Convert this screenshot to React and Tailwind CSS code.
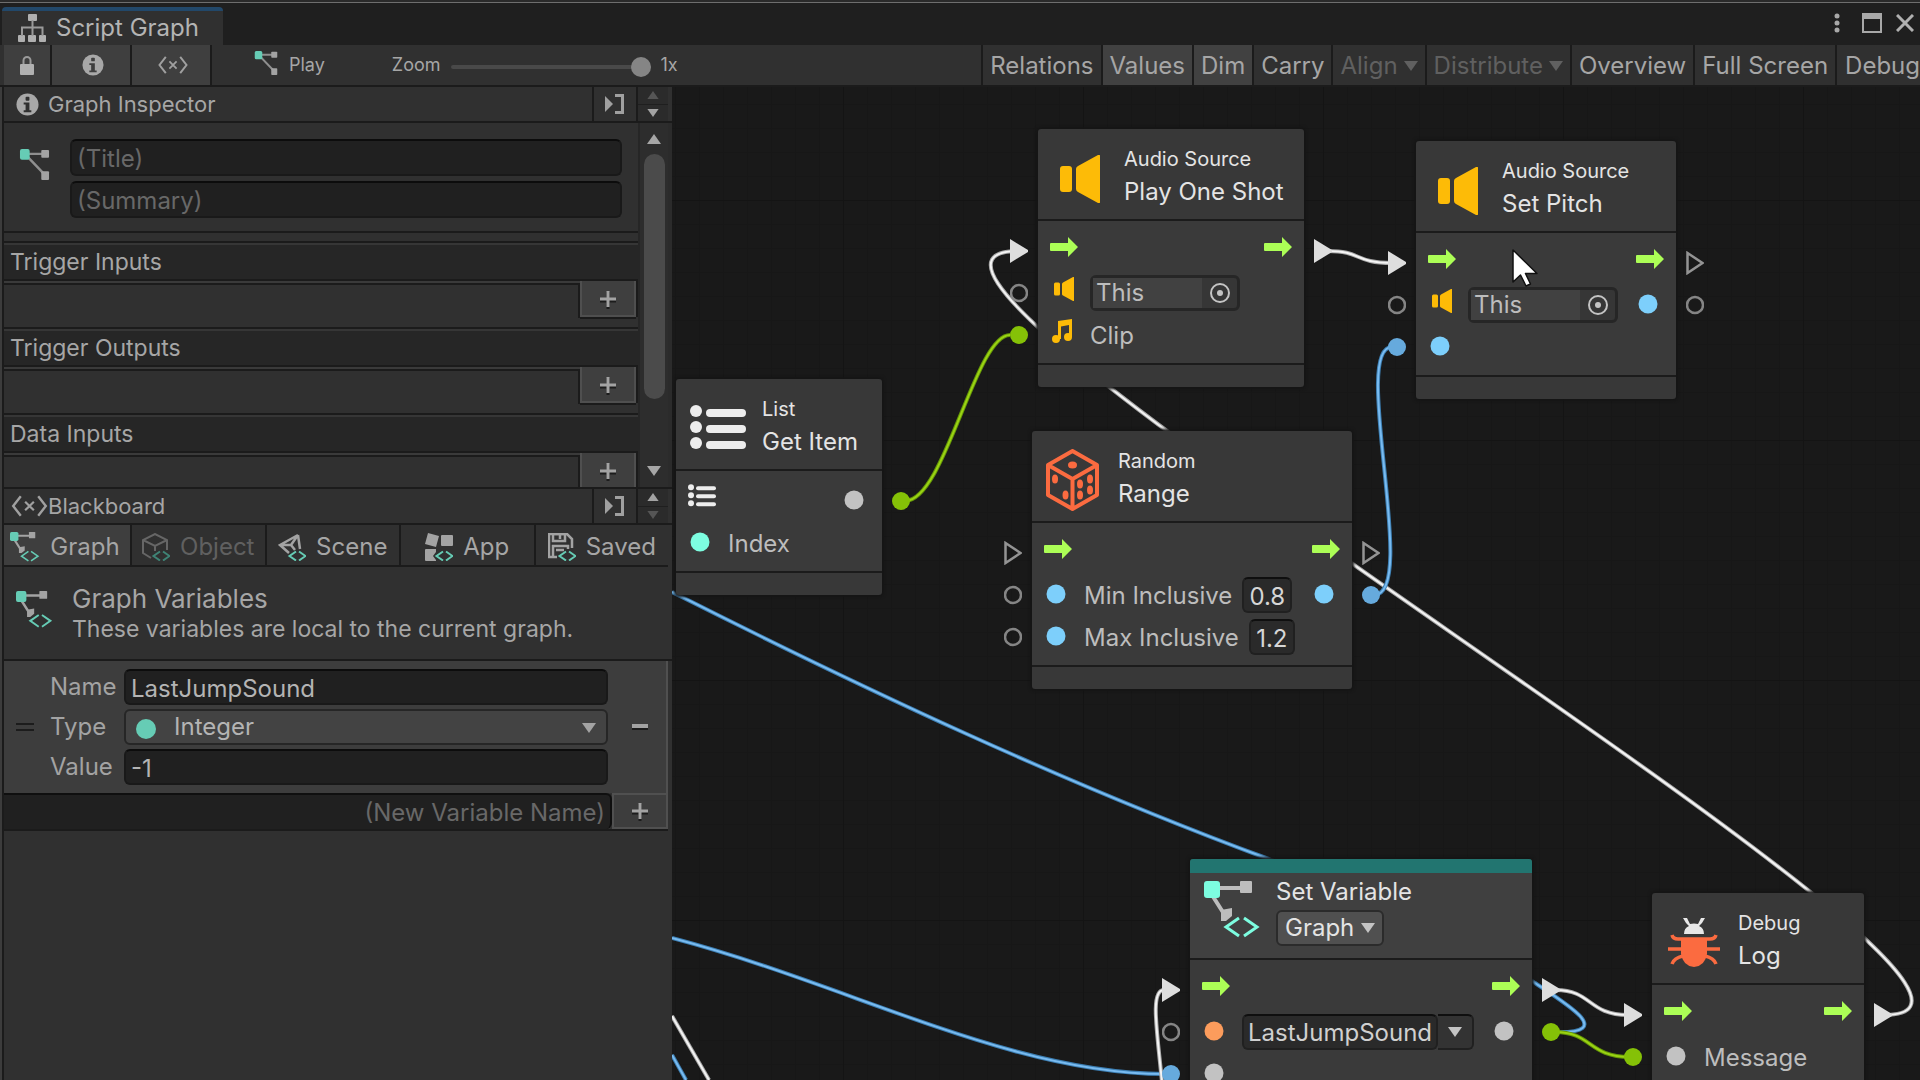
import React from "react";

const TEAL = "#66ccb5";

/* ---------- icons ---------- */

function GraphIcon({ className }) {
  return (
    <svg className={className} viewBox="0 0 30 32" fill="none" aria-hidden="true">
      <path d="M8 5H24M5 5L26 27" stroke="#8f8f8f" strokeWidth="2.5" />
      <rect x="0" y="0" width="10" height="11" rx="2" fill={TEAL} />
      <rect x="22" y="1" width="8" height="8" rx="1" fill="#a3a3a3" />
      <rect x="22" y="23" width="8" height="9" rx="1" fill="#a3a3a3" />
    </svg>
  );
}

function Chevrons({ x, y, color }) {
  return (
    <g stroke={color} strokeWidth="3" fill="none" transform={`translate(${x} ${y})`}>
      <path d="M17 1L4 10L17 19" />
      <path d="M22 1L35 10L22 19" />
    </g>
  );
}

function GraphVariableIcon({ className, bright }) {
  const teal = bright ? "#7dfde0" : TEAL;
  const gray = bright ? "#bdbdbd" : "#a3a3a3";
  return (
    <svg className={className} viewBox="0 0 57 57" fill="none" aria-hidden="true">
      <path d="M14 7H38M8 14L22 36" stroke={gray} strokeWidth="4" />
      <rect x="0" y="0" width="16" height="17" rx="3" fill={teal} />
      <rect x="36" y="0" width="12" height="12" rx="1" fill={gray} />
      <path d="M17 29l11-2v8l-6 5h-5z" fill={gray} />
      <Chevrons x={18} y={36} color={teal} />
    </svg>
  );
}

function ScriptGraphIcon() {
  return (
    <svg className="h-7 w-7" viewBox="0 0 28 28" aria-hidden="true">
      <g fill="#b0b0b0">
        <rect x="10" y="0" width="9" height="7" rx="1" />
        <rect x="0" y="21" width="7" height="7" rx="1" />
        <rect x="10" y="21" width="8" height="7" rx="1" />
        <rect x="21" y="21" width="7" height="7" rx="1" />
      </g>
      <path d="M14.500 6V22M4 22V13.500H24.500V22" stroke="#9a9a9a" strokeWidth="2" fill="none" />
    </svg>
  );
}

function LockIcon() {
  return (
    <svg className="h-5 w-4" viewBox="0 0 16 20" aria-hidden="true">
      <rect x="1" y="8" width="14" height="11" rx="1" fill="#b0b0b0" />
      <path d="M4.500 8V4.500a3.500 3.500 0 0 1 7 0V8" stroke="#9a9a9a" strokeWidth="2" fill="none" />
    </svg>
  );
}

function InfoIcon({ className, hole }) {
  return (
    <svg className={className} viewBox="0 0 24 24" aria-hidden="true">
      <circle cx="12" cy="12" r="11.500" fill="#a8a8a8" />
      <g fill={hole}>
        <rect x="10" y="4" width="4" height="4" rx="1" />
        <path d="M8 10h6v8h2v2H8v-2h2v-6H8z" />
      </g>
    </svg>
  );
}

function BlackboardIcon({ className }) {
  return (
    <svg className={className} viewBox="0 0 34 20" fill="none" stroke="#a0a0a0" strokeWidth="2.200" aria-hidden="true">
      <path d="M9 1L2 10L9 19M25 1L32 10L25 19" />
      <path d="M13 6L21 14M21 6L13 14" strokeWidth="2" />
    </svg>
  );
}

function DockIcon() {
  return (
    <svg className="h-5 w-5" viewBox="0 0 20 20" aria-hidden="true">
      <path d="M0 2L8 10L0 18Z" fill="#a0a0a0" />
      <path d="M10 1.500H17.500V18.500H10" stroke="#a0a0a0" strokeWidth="3" fill="none" />
    </svg>
  );
}

function Triangle({ className, up }) {
  return (
    <svg className={className} viewBox="0 0 14 10" fill="currentColor" aria-hidden="true">
      <path d={up ? "M0 10L7 0L14 10Z" : "M0 0L7 10L14 0Z"} />
    </svg>
  );
}

function Plus() {
  return (
    <svg className="h-5 w-5" viewBox="0 0 20 20" aria-hidden="true">
      <path d="M2 12H18M10 3V20" stroke="#1c1c1c" strokeWidth="3" />
      <path d="M2 10H18M10 2V18" stroke="#a3a3a3" strokeWidth="3" />
    </svg>
  );
}

function TabChevrons({ color }) {
  return <path d="M18 18.500L11.500 23L18 27.500M21 18.500L27.500 23L21 27.500" stroke={color} strokeWidth="2" />;
}

function ObjectTabIcon() {
  return (
    <svg className="h-7 w-7" viewBox="0 0 28 28" fill="none" aria-hidden="true">
      <path d="M9 25L1 20V7L13 1L25 7V17M1 7L13 13L25 7M13 13V18" stroke="#666" strokeWidth="2" />
      <TabChevrons color="#3f8476" />
    </svg>
  );
}

function SceneTabIcon() {
  return (
    <svg className="h-7 w-7" viewBox="0 0 28 28" fill="none" aria-hidden="true">
      <path d="M20 2L2 12L11 20M20 2L22 16M20 2L13 12H2M13 12L17 17" stroke="#a3a3a3" strokeWidth="2.500" />
      <TabChevrons color={TEAL} />
    </svg>
  );
}

function AppTabIcon() {
  return (
    <svg className="h-7 w-7" viewBox="0 0 28 28" fill="none" aria-hidden="true">
      <g fill="#a3a3a3">
        <path d="M3 0L14 3L11 14L0 11Z" />
        <rect x="16" y="2" width="12" height="11" rx="1" />
        <path d="M0 17Q0 16 1 16H11V19L8 23L11 27V28H1Q0 28 0 27Z" />
      </g>
      <TabChevrons color={TEAL} />
    </svg>
  );
}

function SavedTabIcon() {
  return (
    <svg className="h-7 w-7" viewBox="0 0 28 28" fill="none" aria-hidden="true">
      <path d="M1 1H19L24 6V15M1 0V24H9" stroke="#a3a3a3" strokeWidth="2.500" />
      <path d="M5 1H17V8H5ZM12 2V6" stroke="#a3a3a3" strokeWidth="2.500" />
      <path d="M5 24V13H20V16M8 17H16" stroke="#a3a3a3" strokeWidth="2.500" />
      <TabChevrons color={TEAL} />
    </svg>
  );
}

function SpeakerIcon({ className }) {
  return (
    <svg className={className} viewBox="0 0 40 48" fill="#fdbb07" aria-hidden="true">
      <rect x="0" y="11" width="12" height="26" rx="3" />
      <path d="M16 14q0-2 2-3L38 0q2-1 2 1V47q0 2-2 1L18 37q-2-1-2-3Z" />
    </svg>
  );
}

function NoteIcon() {
  return (
    <svg className="-mt-2 mr-1 h-6 w-5" viewBox="0 0 20 24" fill="#fdbb07" aria-hidden="true">
      <path d="M6 2L20 0V18H17V6L9 7.500V20H6Z" />
      <circle cx="4" cy="20" r="4" />
      <circle cx="16" cy="18" r="4" />
    </svg>
  );
}

function ListIcon({ className }) {
  return (
    <svg className={className} viewBox="0 0 56 45" fill="#ededed" aria-hidden="true">
      {[6, 22, 38].map((y) => (
        <g key={y}>
          <circle cx="6" cy={y} r="6" />
          <rect x="16" y={y - 2} width="40" height="8" rx="4" />
        </g>
      ))}
    </svg>
  );
}

function DiceIcon() {
  return (
    <svg className="mr-1 h-[62px] w-[53px]" viewBox="0 0 53 62" fill="none" aria-hidden="true">
      <path
        d="M26.500 2L51 16V46L26.500 60L2 46V16ZM2 16L26.500 30L51 16M26.500 30V60"
        stroke="#fb6b40"
        strokeWidth="4"
        strokeLinejoin="round"
      />
      <g fill="#fb6b40">
        <ellipse cx="26.500" cy="16" rx="4.500" ry="3.500" />
        <ellipse cx="9" cy="30" rx="3" ry="4.500" />
        <ellipse cx="19.500" cy="46" rx="3" ry="4.500" />
        <ellipse cx="34" cy="35" rx="3" ry="4.500" />
        <ellipse cx="44" cy="30" rx="3" ry="4.500" />
        <ellipse cx="34" cy="46" rx="3" ry="4.500" />
        <ellipse cx="44" cy="41" rx="3" ry="4.500" />
      </g>
    </svg>
  );
}

function BugIcon() {
  return (
    <svg className="h-[49px] w-[52px]" viewBox="0 0 52 49" fill="none" aria-hidden="true">
      <path d="M16 16q0-6 5-8l-3-3-3-5h4l3 6q4-1 8 0l3-6h4l-3 5-3 3q5 2 5 8Z" fill="#e8e8e8" />
      <path
        d="M4 17q1 4 6 4H42q5 0 6-4M0 31H52M4 46q2-6 11-8M48 46q-2-6-11-8"
        stroke="#fb6b40"
        strokeWidth="3.500"
      />
      <path d="M13 20H39V36Q37 48 26 49Q15 48 13 36Z" fill="#fb6b40" />
    </svg>
  );
}

function FlowArrow() {
  return (
    <svg className="h-7 w-7 shrink-0" viewBox="0 0 28 28" fill="#acfe56" aria-hidden="true">
      <path d="M1 6H18V0L28 10L18 20V14H1Q0 14 0 13V7Q0 6 1 6Z" />
    </svg>
  );
}

function Dot({ color }) {
  return (
    <svg className="h-7 w-7 shrink-0" viewBox="0 0 28 28" aria-hidden="true">
      <circle cx="12" cy="13" r="9.500" fill={color} />
    </svg>
  );
}

function TargetIcon() {
  return (
    <svg className="h-5 w-5" viewBox="0 0 20 20" fill="none" aria-hidden="true">
      <circle cx="10" cy="10" r="9" stroke="#c4c4c4" strokeWidth="2" />
      <circle cx="10" cy="10" r="3" fill="#c4c4c4" />
    </svg>
  );
}

/* ---------- window bars ---------- */

function TitleBar() {
  return (
    <header className="flex h-[45px] shrink-0 items-end justify-between border-t-2 border-[#2a2a2a] bg-[#1f1f1f]">
      <div className="flex h-full w-full items-end justify-between border-t border-[#6e6e6e] pl-0.5">
        <div className="flex h-[38px] items-center gap-2.5 rounded-t border-t-4 border-[#22486a] bg-[#303030] pr-6 pl-4 text-2xl leading-8 text-[#b4b4b4]">
          <ScriptGraphIcon />
          Script Graph
        </div>
        <div className="flex h-[38px] items-center gap-[22px] pr-1.5 pb-1.5">
          <button aria-label="More" className="flex">
            <svg className="h-5 w-1.5" viewBox="0 0 6 20" fill="#a8a8a8">
              <circle cx="3" cy="3" r="2.500" />
              <circle cx="3" cy="10" r="2.500" />
              <circle cx="3" cy="17" r="2.500" />
            </svg>
          </button>
          <button aria-label="Maximize" className="flex">
            <svg className="h-5 w-5" viewBox="0 0 20 20" fill="none">
              <rect x="1" y="1" width="18" height="18" stroke="#a8a8a8" strokeWidth="2" />
              <path d="M0 3H20" stroke="#a8a8a8" strokeWidth="6" />
            </svg>
          </button>
          <button aria-label="Close" className="-ml-2 flex">
            <svg className="h-[18px] w-[18px]" viewBox="0 0 18 18" stroke="#b0b0b0" strokeWidth="3">
              <path d="M1 1L17 17M17 1L1 17" />
            </svg>
          </button>
        </div>
      </div>
    </header>
  );
}

const toolbarButtons = [
  { label: "Relations" },
  { label: "Values", active: true },
  { label: "Dim", active: true },
  { label: "Carry" },
  { label: "Align", disabled: true, menu: true },
  { label: "Distribute", disabled: true, menu: true },
  { label: "Overview" },
  { label: "Full Screen" },
];

function Toolbar() {
  return (
    <div className="flex h-[42px] shrink-0 overflow-hidden border-b-2 border-[#1b1b1b] bg-[#303030] pl-1">
      <button aria-label="Lock" className="flex w-12 items-center justify-center border-r-2 border-[#1b1b1b] bg-[#3f3f3f] pt-0.5">
        <LockIcon />
      </button>
      <button aria-label="Graph Inspector" className="flex w-20 items-center justify-center border-r-2 border-[#1b1b1b] bg-[#3f3f3f] pl-1">
        <InfoIcon className="h-[22px] w-[22px]" hole="#3f3f3f" />
      </button>
      <button aria-label="Blackboard" className="flex w-20 items-center justify-center border-r-2 border-[#1b1b1b] bg-[#3f3f3f] pl-1">
        <BlackboardIcon className="h-[18px] w-8" />
      </button>
      <div className="ml-[42px] flex items-center gap-[11px] text-lg text-[#a6a6a6]">
        <GraphIcon className="-mt-1 h-6 w-6" />
        Play
      </div>
      <div className="ml-[67px] flex items-center gap-2.5 text-lg text-[#a6a6a6]">
        <label htmlFor="zoom">Zoom</label>
        <input
          id="zoom"
          type="range"
          defaultValue="100"
          className="mt-1 h-5 w-[200px] appearance-none bg-transparent [&::-webkit-slider-runnable-track]:h-1 [&::-webkit-slider-runnable-track]:rounded [&::-webkit-slider-runnable-track]:bg-[#494949] [&::-webkit-slider-thumb]:-mt-2 [&::-webkit-slider-thumb]:h-5 [&::-webkit-slider-thumb]:w-5 [&::-webkit-slider-thumb]:appearance-none [&::-webkit-slider-thumb]:rounded-full [&::-webkit-slider-thumb]:bg-[#858585]"
        />
        <span>1x</span>
      </div>
      <div className="ml-auto flex shrink-0 text-2xl">
        {toolbarButtons.map((b) => (
          <button
            key={b.label}
            disabled={b.disabled}
            className={`flex items-center gap-1.5 border-l-2 border-[#1b1b1b] px-[7px] pt-0.5 whitespace-nowrap ${
              b.active ? "bg-[#414141]" : ""
            } ${b.disabled ? "text-[#606060]" : "text-[#a6a6a6]"}`}
          >
            {b.label}
            {b.menu && <Triangle className="h-2.5 w-3.5" />}
          </button>
        ))}
        <button className="border-l-2 border-[#1b1b1b] pt-0.5 pl-2 text-[#a6a6a6]">Debug</button>
      </div>
    </div>
  );
}

/* ---------- side panel ---------- */

function PanelHeader({ icon, title, upActive }) {
  return (
    <div className="flex h-9 shrink-0 border-b-2 border-[#1b1b1b] text-[22px] text-[#a6a6a6]">
      <h2 className="flex flex-1 items-center border-r-2 border-[#1b1b1b]">
        {icon}
        {title}
      </h2>
      <button aria-label={`Dock ${title}`} className="flex w-11 items-center justify-center border-r-2 border-[#1b1b1b]">
        <DockIcon />
      </button>
      <div className="mr-1 flex w-[30px] flex-col bg-[#2b2b2b]">
        <button
          aria-label={`Move ${title} up`}
          className={`flex flex-1 items-center justify-center border-b border-[#1f1f1f] ${upActive ? "text-[#a3a3a3]" : "text-[#555]"}`}
        >
          <Triangle className="h-2 w-3.5" up />
        </button>
        <button
          aria-label={`Move ${title} down`}
          className={`flex flex-1 items-center justify-center ${upActive ? "text-[#555]" : "text-[#a3a3a3]"}`}
        >
          <Triangle className="h-2 w-3.5" />
        </button>
      </div>
    </div>
  );
}

function PortSection({ title }) {
  return (
    <section className="border-t-2 border-[#1b1b1b]">
      <h3 className="flex h-[38px] items-center border-t-2 border-b-2 border-t-[#363636] border-b-[#1b1b1b] bg-[#262626] pl-1.5 text-[23px] text-[#a6a6a6]">
        {title}
      </h3>
      <div className="flex h-[46px] items-start">
        <div className="flex-1 border-t-2 border-[#3a3a3a]">
          <div className="h-[35px] border-t-2 border-r-2 border-[#1b1b1b] bg-[#303030]" />
        </div>
        <button
          aria-label={`Add to ${title}`}
          className="flex h-9 w-14 items-center justify-center border-2 border-t-0 border-[#4f4f4f] bg-[#3f3f3f] pt-0.5 shadow-[0_2px_0_#1b1b1b]"
        >
          <Plus />
        </button>
        <div className="h-9 w-0.5 bg-[#1b1b1b]" />
      </div>
    </section>
  );
}

const FIELD =
  "min-w-0 rounded-md border-2 border-[#191919] border-t-[#0c0c0c] bg-[#202020] px-[5px] pt-0.5 text-[#b4b4b4] placeholder:text-[#686868] outline-none";

function GraphInspector() {
  return (
    <section className="shrink-0">
      <PanelHeader icon={<InfoIcon className="mr-[9px] ml-3 h-[23px] w-[23px]" hole="#303030" />} title="Graph Inspector" />
      <div className="flex h-[364px]">
        <div className="flex-1 overflow-hidden">
          <div className="flex border-b-2 border-[#1b1b1b] pt-4 pr-4 pb-[13px] pl-[15px]">
            <GraphIcon className="mt-2.5 mr-5 h-[31px] w-[31px] shrink-0" />
            <div className="flex flex-1 flex-col gap-[5px]">
              <input aria-label="Title" placeholder="(Title)" className={`${FIELD} h-[37px] text-2xl`} />
              <input aria-label="Summary" placeholder="(Summary)" className={`${FIELD} h-[37px] text-2xl`} />
            </div>
          </div>
          <div className="h-2" />
          <PortSection title="Trigger Inputs" />
          <PortSection title="Trigger Outputs" />
          <PortSection title="Data Inputs" />
        </div>
        <div className="flex w-[30px] flex-col items-center border-l-2 border-[#262626] bg-[#2d2d2d] py-[11px] text-[#a6a6a6]">
          <Triangle className="h-2.5 w-3.5 shrink-0" up />
          <div className="mt-2.5 h-[245px] w-[21px] rounded-full bg-[#4b4b4b]" />
          <Triangle className="mt-auto h-2.5 w-3.5 shrink-0" />
        </div>
        <div className="w-1 bg-[#2b2b2b]" />
      </div>
    </section>
  );
}

const scopes = [
  { label: "Graph", icon: <GraphVariableIcon className="h-[30px] w-[30px]" />, active: true },
  { label: "Object", icon: <ObjectTabIcon />, disabled: true },
  { label: "Scene", icon: <SceneTabIcon /> },
  { label: "App", icon: <AppTabIcon /> },
  { label: "Saved", icon: <SavedTabIcon /> },
];

function Blackboard() {
  return (
    <section className="flex flex-1 flex-col border-t-2 border-[#1b1b1b]">
      <PanelHeader icon={<BlackboardIcon className="ml-[7px] h-[22px] w-[37px]" />} title="Blackboard" upActive />
      <div role="tablist" className="mr-1 flex h-[42px] shrink-0 border-b-2 border-[#1b1b1b] text-2xl">
        {scopes.map((s) => (
          <button
            key={s.label}
            role="tab"
            aria-selected={!!s.active}
            disabled={s.disabled}
            className={`flex items-center justify-center gap-2.5 pt-1 ${
              s.active ? "w-[126px] bg-[#3e3e3e] pr-1" : "flex-1 border-l-2 border-[#1b1b1b]"
            } ${s.disabled ? "text-[#606060]" : "text-[#a6a6a6]"}`}
          >
            {s.icon}
            {s.label}
          </button>
        ))}
      </div>
      <div className="flex h-[94px] shrink-0 items-start border-b-2 border-[#1b1b1b] pl-3 text-[#a6a6a6]">
        <GraphVariableIcon className="mt-6 h-[37px] w-[37px]" />
        <div className="pt-4 pl-[19px]">
          <h3 className="text-[26px] leading-8">Graph Variables</h3>
          <p className="text-[23px] leading-7">These variables are local to the current graph.</p>
        </div>
      </div>

      <div className="mr-1 flex shrink-0 items-center border-r-2 border-[#505050] bg-[#3d3d3d] py-2 text-2xl text-[#a3a3a3]">
        <div className="flex w-[46px] flex-col gap-1 pl-3">
          <div className="h-0.5 w-[18px] bg-[#1c1c1c]" />
          <div className="h-0.5 w-[18px] bg-[#1c1c1c]" />
        </div>
        <div className="grid flex-1 grid-cols-[74px_1fr] items-center gap-y-1">
          <label htmlFor="var-name">Name</label>
          <input id="var-name" defaultValue="LastJumpSound" className={`${FIELD} h-9`} />
          <label htmlFor="var-type">Type</label>
          <div className="relative h-9">
            <select
              id="var-type"
              className="h-9 w-full appearance-none rounded-md border-2 border-[#262626] bg-[#434343] pl-12 text-[#b4b4b4] outline-none"
            >
              <option>Integer</option>
            </select>
            <span className="pointer-events-none absolute top-2.5 left-3 h-5 w-5 rounded-full bg-[#66ccb5]" />
            <Triangle className="pointer-events-none absolute top-3.5 right-3 h-2.5 w-3.5 text-[#a3a3a3]" />
          </div>
          <label htmlFor="var-value">Value</label>
          <input id="var-value" defaultValue="-1" className={`${FIELD} h-9`} />
        </div>
        <button aria-label="Remove variable" className="flex h-9 w-[58px] items-center justify-center pl-1.5">
          <span className="h-1.5 w-4 border-b-2 border-[#1c1c1c] bg-[#a3a3a3]" />
        </button>
      </div>

      <div className="mr-1 flex h-[38px] shrink-0 border-b-2 border-[#1b1b1b]">
        <input
          aria-label="New Variable Name"
          placeholder="(New Variable Name)"
          className="min-w-0 flex-1 rounded-r-md border-t-2 border-r-2 border-[#0f0f0f] bg-[#202020] px-[5px] pt-0.5 text-right text-2xl text-[#b4b4b4] outline-none placeholder:text-[#686868]"
        />
        <button aria-label="Add variable" className="flex w-14 items-center justify-center border-2 border-[#505050] bg-[#3d3d3d]">
          <Plus />
        </button>
      </div>
    </section>
  );
}

/* ---------- canvas ---------- */

const WIRE_COLORS = {
  white: ["#a9a9a9", "#f4f4f4"],
  blue: ["#3d7fb3", "#79bbf0"],
  green: ["#659608", "#9ad313"],
};

const wires = [
  { color: "white", d: "M672 1016L709 1080" },
  { color: "blue", d: "M672 1055L686 1080" },
  { color: "blue", d: "M672 592C866 690 1066 784 1266 858C1370 898 1470 936 1535 983C1570 1006 1612 1032 1560 1032" },
  { color: "blue", d: "M672 938C850 985 1010 1074 1165 1074" },
  { color: "white", d: "M1884 1015C2118 1015 786 251 1018 251" },
  { color: "green", d: "M905 501C945 501 975 335 1010 335" },
  { color: "white", d: "M1328 251C1362 251 1354 263 1392 263" },
  { color: "blue", d: "M1374 595C1420 595 1350 347 1392 347" },
  { color: "white", d: "M1164 990C1150 990 1157 1030 1162 1082" },
  { color: "white", d: "M1556 990C1592 990 1588 1015 1628 1015" },
  { color: "green", d: "M1555 1032C1592 1032 1588 1057 1630 1057" },
];

function Wires() {
  return (
    <svg className="absolute top-0 left-0 h-[993px] w-[1248px]" viewBox="672 87 1248 993" fill="none" aria-hidden="true">
      {wires.map((w) => (
        <g key={w.d}>
          <path d={w.d} stroke={WIRE_COLORS[w.color][0]} strokeWidth="4" />
          <path d={w.d} stroke={WIRE_COLORS[w.color][1]} strokeWidth="2" />
        </g>
      ))}
    </svg>
  );
}

function Port({ kind, side }) {
  const place = side === "left" ? "-left-7" : "-right-7";
  const cls = `absolute top-[9px] h-6 w-[18px] ${place}`;
  return (
    <svg className={cls} viewBox="0 0 18 24" fill="none" aria-hidden="true">
      {kind === "flow" && <path d="M0 0L18 11V13L0 24Z" fill="#dedede" />}
      {kind === "flowEmpty" && <path d="M1.500 2L16.500 12L1.500 22Z" stroke="#949494" strokeWidth="2.500" />}
      {kind === "empty" && <circle cx="9" cy="12" r="8" stroke="#858585" strokeWidth="2.500" />}
      {kind === "green" && <circle cx="9" cy="12" r="9" fill="#85c107" />}
      {kind === "blue" && <circle cx="9" cy="12" r="9" fill="#66aadd" />}
    </svg>
  );
}

function Row({ left, right, start, end, children }) {
  return (
    <div className="relative flex h-[42px] items-center px-3 text-2xl text-[#bdbdbd]">
      {left && <Port kind={left} side="left" />}
      {start && <div className="mr-3 flex w-7 shrink-0 justify-center">{start}</div>}
      {children}
      {end && <div className="ml-auto flex">{end}</div>}
      {right && <Port kind={right} side="right" />}
    </div>
  );
}

function Node({ className, header, children }) {
  return (
    <article className={`absolute rounded-[3px] bg-[#383838] shadow-[0_0_3px_2px_#151515] ${className}`}>
      {header}
      <div className="border-y-2 border-[#1b1b1b] bg-[#3a3a3a] pt-[9px] pb-[7px]">{children}</div>
      <div className="h-[22px]" />
    </article>
  );
}

function NodeHeader({ icon, kicker, title }) {
  return (
    <div className="flex h-[90px] pl-3 text-[#e4e4e4]">
      <div className="flex w-[60px] items-center justify-center pt-2">{icon}</div>
      <div className="pt-[18px] pl-[14px]">
        <p className="text-xl leading-6">{kicker}</p>
        <h4 className="mt-[5px] text-2xl leading-8">{title}</h4>
      </div>
    </div>
  );
}

function ThisField() {
  return (
    <div className="flex h-9 w-[150px] rounded-md border-[3px] border-[#262626] bg-[#363636]">
      <input aria-label="Target" defaultValue="This" className="w-[109px] min-w-0 bg-[#414141] px-[3px] outline-none" />
      <button aria-label="Pick object" className="flex flex-1 items-center justify-center">
        <TargetIcon />
      </button>
    </div>
  );
}

const NUMBER_FIELD =
  "ml-2.5 h-9 rounded-md border-2 border-[#202020] border-t-[#0f0f0f] bg-[#2a2a2a] pt-0.5 text-center text-[#d6d6d6] outline-none";

function Canvas() {
  return (
    <main className="relative flex-1 overflow-hidden bg-[#191919] bg-[linear-gradient(to_right,#141414_1px,transparent_1px),linear-gradient(to_bottom,#141414_1px,transparent_1px),linear-gradient(to_right,#171717_1px,transparent_1px),linear-gradient(to_bottom,#171717_1px,transparent_1px)] bg-[size:240px_240px,240px_240px,24px_24px,24px_24px] bg-[position:171px_113px,171px_113px,3px_17px,3px_17px]">
      <Wires />

      <Node
        className="top-[292px] left-1 w-[206px]"
        header={<NodeHeader icon={<ListIcon className="-mt-0.5 h-[45px] w-14" />} kicker="List" title="Get Item" />}
      >
        <Row start={<ListIcon className="-mt-3 h-[23px] w-7" />} end={<Dot color="#c2c2c2" />} right="green" />
        <Row start={<Dot color="#7dfde0" />}>
          <span className="pt-0.5">Index</span>
        </Row>
      </Node>

      <Node
        className="top-[42px] left-[366px] w-[266px]"
        header={<NodeHeader icon={<SpeakerIcon className="mt-0.5 h-12 w-10" />} kicker="Audio Source" title="Play One Shot" />}
      >
        <Row left="flow" right="flow" start={<FlowArrow />} end={<FlowArrow />} />
        <Row left="empty" start={<SpeakerIcon className="-mt-2 h-6 w-5" />}>
          <ThisField />
        </Row>
        <Row left="green" start={<NoteIcon />}>
          <span className="pt-0.5">Clip</span>
        </Row>
      </Node>

      <Node
        className="top-[54px] left-[744px] w-[260px]"
        header={<NodeHeader icon={<SpeakerIcon className="mt-0.5 h-12 w-10" />} kicker="Audio Source" title="Set Pitch" />}
      >
        <Row left="flow" right="flowEmpty" start={<FlowArrow />} end={<FlowArrow />} />
        <Row left="empty" right="empty" start={<SpeakerIcon className="-mt-2 h-6 w-5" />} end={<Dot color="#7dcffb" />}>
          <ThisField />
        </Row>
        <Row left="blue" start={<Dot color="#7dcffb" />} />
      </Node>

      <Node className="top-[344px] left-[360px] w-[320px]" header={<NodeHeader icon={<DiceIcon />} kicker="Random" title="Range" />}>
        <Row left="flowEmpty" right="flowEmpty" start={<FlowArrow />} end={<FlowArrow />} />
        <Row left="empty" right="blue" start={<Dot color="#7dcffb" />} end={<Dot color="#7dcffb" />}>
          <label htmlFor="min" className="pt-0.5">
            Min Inclusive
          </label>
          <input id="min" defaultValue="0.8" className={`${NUMBER_FIELD} w-[50px]`} />
        </Row>
        <Row left="empty" start={<Dot color="#7dcffb" />}>
          <label htmlFor="max" className="pt-0.5">
            Max Inclusive
          </label>
          <input id="max" defaultValue="1.2" className={`${NUMBER_FIELD} w-[46px]`} />
        </Row>
      </Node>

      <Node
        className="top-[772px] left-[518px] w-[342px]"
        header={
          <div className="flex h-[99px] rounded-t-[3px] border-t-[14px] border-[#227570] bg-[#404040] pl-[14px] text-[#e4e4e4]">
            <GraphVariableIcon className="mt-2 h-[57px] w-[57px]" bright />
            <div className="pt-[3px] pl-[15px]">
              <h4 className="text-2xl leading-8">Set Variable</h4>
              <button className="mt-0.5 flex h-9 items-center gap-[7px] rounded-md border-2 border-[#2b2b2b] bg-[#505050] px-[7px] text-2xl">
                Graph
                <Triangle className="h-2.5 w-3.5 text-[#c4c4c4]" />
              </button>
            </div>
          </div>
        }
      >
        <Row left="flow" right="flow" start={<FlowArrow />} end={<FlowArrow />} />
        <Row left="empty" right="green" start={<Dot color="#fc9c5c" />} end={<Dot color="#c2c2c2" />}>
          <input
            aria-label="Variable"
            defaultValue="LastJumpSound"
            className="h-9 w-[196px] rounded-md border-2 border-[#202020] border-t-[#0f0f0f] bg-[#2a2a2a] px-1 text-[#d0d0d0] outline-none"
          />
          <button
            aria-label="Choose variable"
            className="flex h-9 w-9 items-center justify-center rounded-r-md border-2 border-l-0 border-[#202020] border-t-[#0f0f0f] bg-[#333]"
          >
            <Triangle className="h-2.5 w-3.5 text-[#c4c4c4]" />
          </button>
        </Row>
        <Row left="blue" start={<Dot color="#c2c2c2" />} />
      </Node>

      <Node className="top-[806px] left-[980px] w-[212px]" header={<NodeHeader icon={<BugIcon />} kicker="Debug" title="Log" />}>
        <Row left="flow" right="flow" start={<FlowArrow />} end={<FlowArrow />} />
        <Row left="green" start={<Dot color="#c2c2c2" />}>
          <span className="pt-0.5">Message</span>
        </Row>
      </Node>

      <svg className="absolute top-[162px] left-[840px] h-[38px] w-[27px]" viewBox="0 0 27 38" aria-hidden="true">
        <path
          d="M1 1V33L8.500 26L14 37L18.500 35L13.500 24.500H25Z"
          fill="#fff"
          stroke="#111"
          strokeWidth="1.500"
          strokeLinejoin="round"
        />
      </svg>
    </main>
  );
}

export default function App() {
  return (
    <div className="flex h-screen flex-col overflow-hidden bg-[#1f1f1f] font-['Inter',sans-serif]">
      <TitleBar />
      <Toolbar />
      <div className="flex min-h-0 flex-1">
        <div className="w-0.5 bg-[#3c3c3c]" />
        <aside className="flex w-[670px] shrink-0 flex-col overflow-hidden border-l-2 border-[#1b1b1b] bg-[#303030]">
          <GraphInspector />
          <Blackboard />
        </aside>
        <Canvas />
      </div>
    </div>
  );
}
